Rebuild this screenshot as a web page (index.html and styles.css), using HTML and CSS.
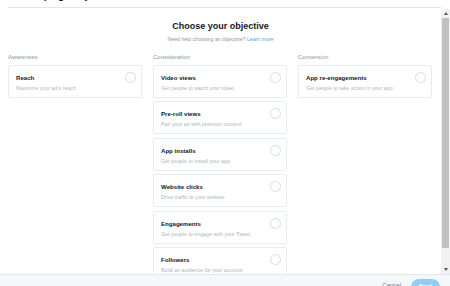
FILE: index.html
```html
<!DOCTYPE html>
<html>
<head>
<meta charset="utf-8">
<link rel="stylesheet" href="styles.css">
</head>
<body>
<div class="top"><div class="top-title">Campaign objective</div></div>
<div class="main">
  <div class="content">
    <h1 class="title">Choose your objective</h1>
    <p class="subtitle">Need help choosing an objective? <a class="link">Learn more</a></p>
    <div class="columns">
      <div class="column">
        <div class="label">Awareness</div>
        <div class="card"><div class="text"><div class="name">Reach</div><div class="desc">Maximize your ad’s reach</div></div><span class="radio"></span></div>
      </div>
      <div class="column">
        <div class="label">Consideration</div>
        <div class="card"><div class="text"><div class="name">Video views</div><div class="desc">Get people to watch your video</div></div><span class="radio"></span></div>
        <div class="card"><div class="text"><div class="name">Pre-roll views</div><div class="desc">Pair your ad with premium content</div></div><span class="radio"></span></div>
        <div class="card"><div class="text"><div class="name">App installs</div><div class="desc">Get people to install your app</div></div><span class="radio"></span></div>
        <div class="card"><div class="text"><div class="name">Website clicks</div><div class="desc">Drive traffic to your website</div></div><span class="radio"></span></div>
        <div class="card"><div class="text"><div class="name">Engagements</div><div class="desc">Get people to engage with your Tweet</div></div><span class="radio"></span></div>
        <div class="card"><div class="text"><div class="name">Followers</div><div class="desc">Build an audience for your account</div></div><span class="radio"></span></div>
      </div>
      <div class="column">
        <div class="label">Conversion</div>
        <div class="card"><div class="text"><div class="name">App re-engagements</div><div class="desc">Get people to take action in your app</div></div><span class="radio"></span></div>
      </div>
    </div>
  </div>
  <div class="scrollbar">
    <div class="sb-btn"><span class="arrow-up"></span></div>
    <div class="sb-track"><div class="sb-thumb"></div></div>
    <div class="sb-btn"><span class="arrow-down"></span></div>
  </div>
</div>
<div class="footer">
  <span class="cancel">Cancel</span>
  <span class="next">Next</span>
</div>
</body>
</html>
```

FILE: styles.css
```css
* { box-sizing: border-box; }
html, body {
  margin: 0;
  padding: 0;
  width: 450px;
  height: 286px;
  overflow: hidden;
  background: #ffffff;
  font-family: "Liberation Sans", Arial, sans-serif;
  color: #14171a;
}
.top {
  height: 9px;
  overflow: hidden;
  margin-left: 8px;
  width: 433px;
  border-bottom: 1px solid #e1e8ed;
  margin-bottom: 0;
  height: 8px;
}
.top-title {
  margin-top: -9.5px;
  padding-left: 14px;
  font-size: 10px;
  line-height: 10px;
  font-weight: bold;
  color: #14171a;
}
.main {
  display: flex;
  height: 265px;
  margin-top: 1px;
}
.content {
  flex: 1;
  overflow: hidden;
}
.title {
  margin: 11px 0 0;
  font-size: 9px;
  line-height: 12px;
  font-weight: bold;
  text-align: center;
  color: #14171a;
}
.subtitle {
  margin: 4px 0 0;
  font-size: 5.2px;
  line-height: 7px;
  text-align: center;
  color: #8899a6;
}
.link { color: #4aa8e6; }
.columns {
  display: grid;
  grid-template-columns: 134px 134px 134px;
  column-gap: 11px;
  margin: 10px 0 0 8px;
}
.column {
  display: flex;
  flex-direction: column;
  gap: 3.4px;
}
.label {
  font-size: 6px;
  line-height: 8px;
  color: #8899a6;
  margin-bottom: 0.6px;
}
.card {
  height: 33px;
  border: 1px solid #e6ecf0;
  border-radius: 2px;
  display: flex;
  align-items: flex-start;
  padding: 6px 5px 0 7px;
  background: #fff;
}
.text { flex: 1; padding-top: 2px; }
.name {
  font-size: 6.1px;
  line-height: 8px;
  font-weight: bold;
  color: #14171a;
}
.desc {
  margin-top: 3px;
  font-size: 5.3px;
  line-height: 6px;
  color: #aab8c2;
  white-space: nowrap;
}
.radio {
  width: 11px;
  height: 11px;
  border: 1px solid #d5dde3;
  border-radius: 50%;
  flex: none;
}
.scrollbar {
  width: 9px;
  flex: none;
  display: flex;
  flex-direction: column;
  background: #f1f1f1;
}
.sb-btn {
  height: 9px;
  display: flex;
  align-items: center;
  justify-content: center;
}
.arrow-up {
  width: 0; height: 0;
  border-left: 2.5px solid transparent;
  border-right: 2.5px solid transparent;
  border-bottom: 3px solid #555;
}
.arrow-down {
  width: 0; height: 0;
  border-left: 2.5px solid transparent;
  border-right: 2.5px solid transparent;
  border-top: 3px solid #555;
}
.sb-track {
  flex: 1;
  padding: 0 1px;
}
.sb-thumb {
  height: 230px;
  background: #c1c1c1;
}
.footer {
  height: 12px;
  background: #f5f8fa;
  border-top: 1px solid #e1e8ed;
  display: flex;
  justify-content: flex-end;
  align-items: flex-start;
  padding-right: 10px;
  gap: 10px;
}
.cancel {
  margin-top: 6px;
  font-size: 6px;
  line-height: 8px;
  color: #657786;
}
.next {
  margin-top: 4px;
  width: 29px;
  height: 16px;
  border-radius: 8px;
  background: #8ecdf8;
  color: #fff;
  font-size: 6px;
  font-weight: bold;
  line-height: 14px;
  text-align: center;
}
```
